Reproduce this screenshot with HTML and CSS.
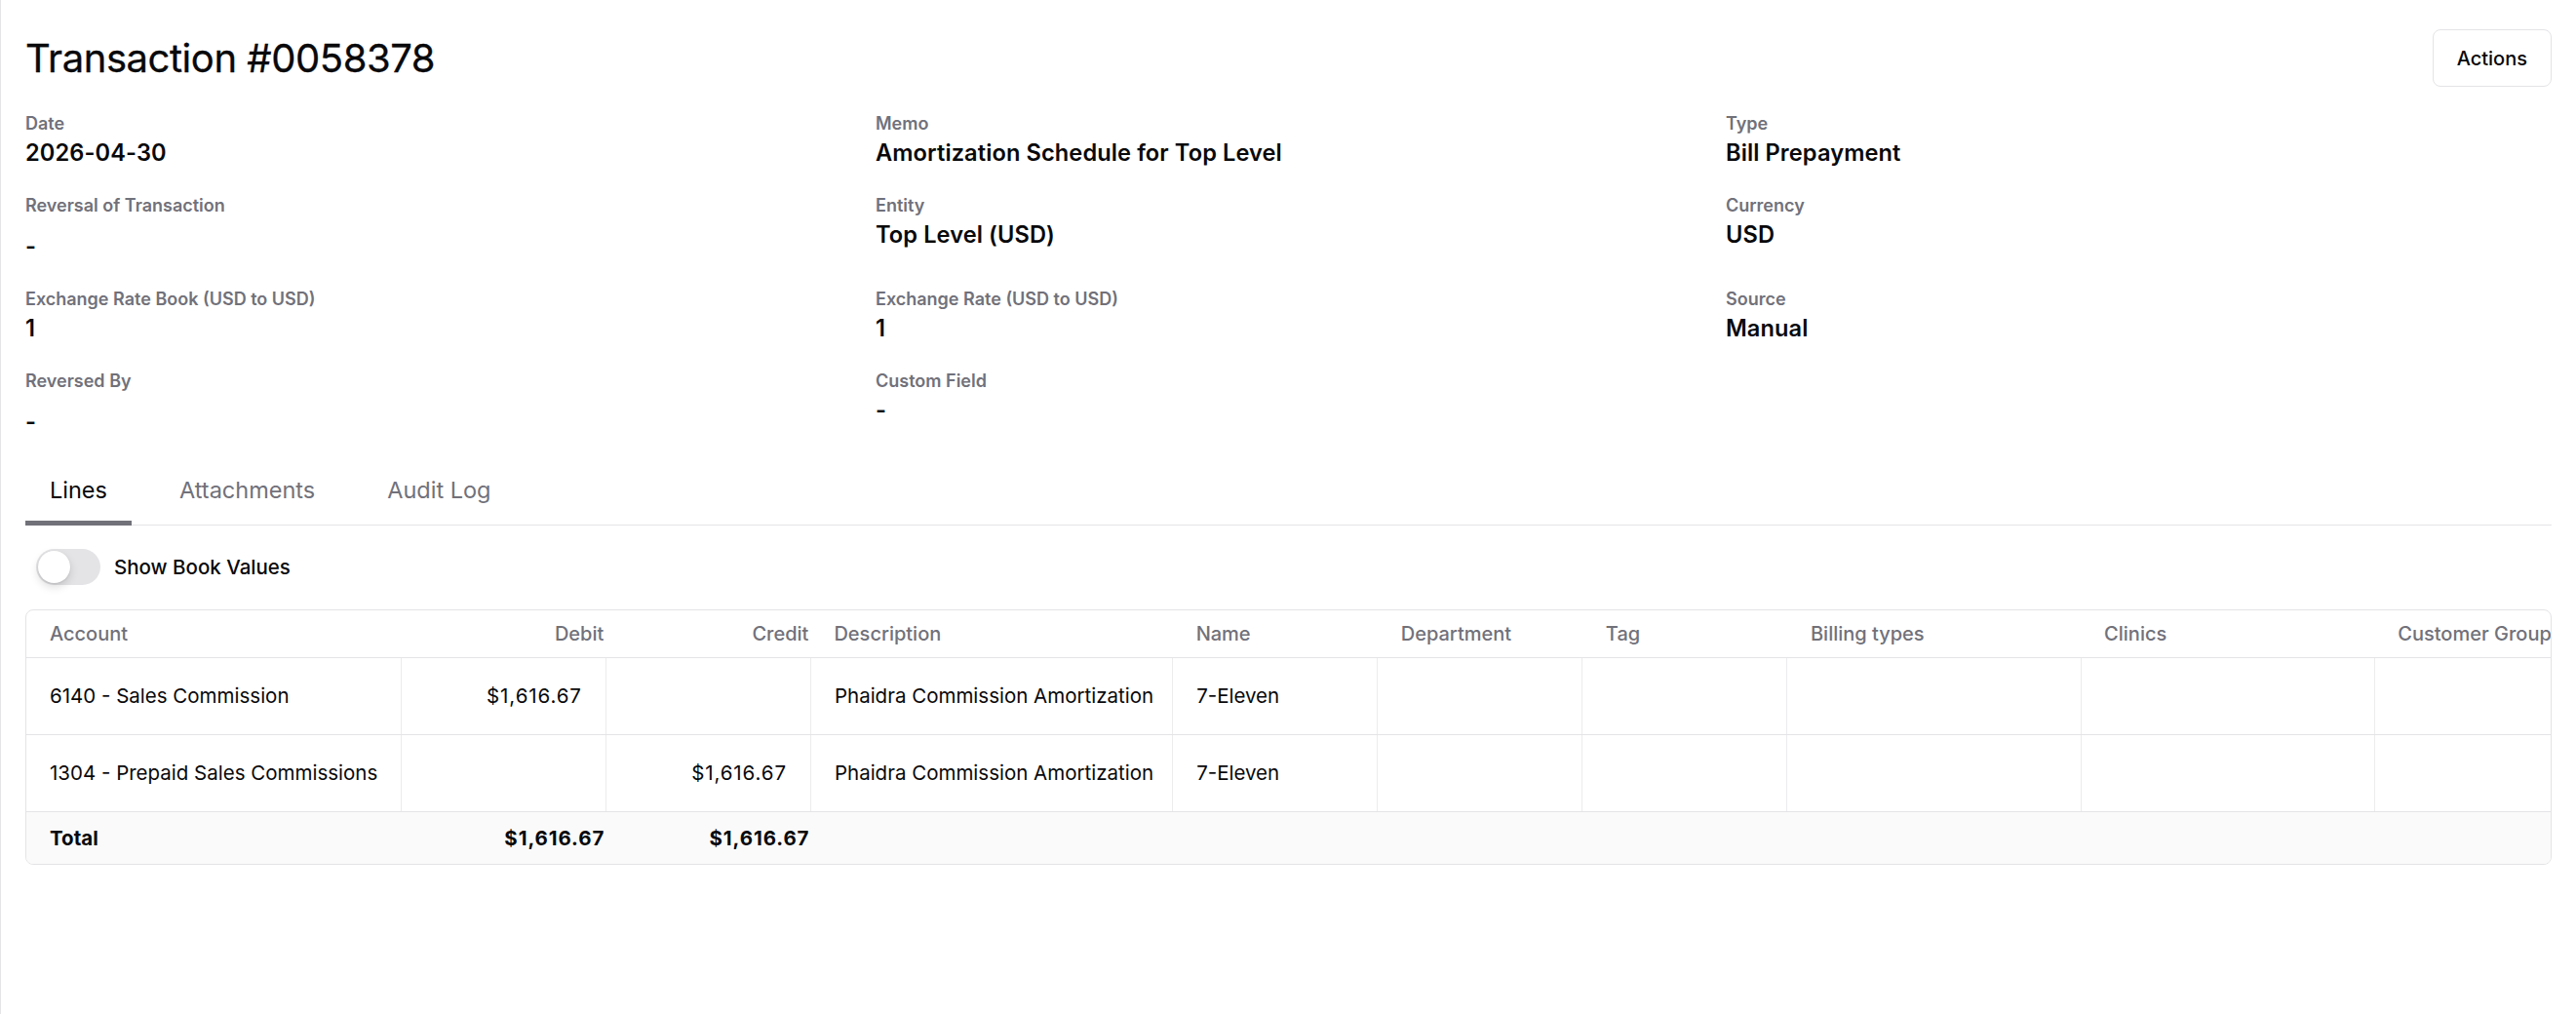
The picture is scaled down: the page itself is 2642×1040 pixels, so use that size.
FILE: index.html
```html
<!DOCTYPE html>
<html lang="en">
<head>
<meta charset="utf-8">
<title>Transaction #0058378</title>
<link rel="stylesheet" href="styles.css">
</head>
<body>
<div class="page">
  <header class="page-header">
    <h1 class="title">Transaction #0058378</h1>
    <button class="btn" type="button">Actions</button>
  </header>

  <dl class="fields">
    <div class="field"><dt class="label">Date</dt><dd class="value">2026-04-30</dd></div>
    <div class="field"><dt class="label">Memo</dt><dd class="value">Amortization Schedule for Top Level</dd></div>
    <div class="field"><dt class="label">Type</dt><dd class="value">Bill Prepayment</dd></div>

    <div class="field"><dt class="label">Reversal of Transaction</dt><dd class="value value-link">-</dd></div>
    <div class="field"><dt class="label">Entity</dt><dd class="value">Top Level (USD)</dd></div>
    <div class="field"><dt class="label">Currency</dt><dd class="value">USD</dd></div>

    <div class="field"><dt class="label">Exchange Rate Book (USD to USD)</dt><dd class="value">1</dd></div>
    <div class="field"><dt class="label">Exchange Rate (USD to USD)</dt><dd class="value">1</dd></div>
    <div class="field"><dt class="label">Source</dt><dd class="value">Manual</dd></div>

    <div class="field"><dt class="label">Reversed By</dt><dd class="value value-link">-</dd></div>
    <div class="field"><dt class="label">Custom Field</dt><dd class="value">-</dd></div>
  </dl>

  <nav class="tabs">
    <button class="tab tab-active" type="button">Lines</button>
    <button class="tab" type="button">Attachments</button>
    <button class="tab" type="button">Audit Log</button>
  </nav>

  <label class="switch-row">
    <span class="switch"><span class="switch-knob"></span></span>
    <span class="switch-label">Show Book Values</span>
  </label>

  <div class="table-wrap">
    <table class="lines">
      <colgroup>
        <col class="c-account">
        <col class="c-num">
        <col class="c-num">
        <col class="c-desc">
        <col class="c-std">
        <col class="c-std">
        <col class="c-std">
        <col class="c-wide">
        <col class="c-wide">
        <col class="c-wide">
      </colgroup>
      <thead>
        <tr>
          <th>Account</th>
          <th class="num">Debit</th>
          <th class="num">Credit</th>
          <th>Description</th>
          <th>Name</th>
          <th>Department</th>
          <th>Tag</th>
          <th>Billing types</th>
          <th>Clinics</th>
          <th>Customer Group</th>
        </tr>
      </thead>
      <tbody>
        <tr>
          <td>6140 - Sales Commission</td>
          <td class="num">$1,616.67</td>
          <td class="num"></td>
          <td>Phaidra Commission Amortization</td>
          <td>7-Eleven</td>
          <td></td><td></td><td></td><td></td><td></td>
        </tr>
        <tr>
          <td>1304 - Prepaid Sales Commissions</td>
          <td class="num"></td>
          <td class="num">$1,616.67</td>
          <td>Phaidra Commission Amortization</td>
          <td>7-Eleven</td>
          <td></td><td></td><td></td><td></td><td></td>
        </tr>
      </tbody>
      <tfoot>
        <tr>
          <td>Total</td>
          <td class="num">$1,616.67</td>
          <td class="num">$1,616.67</td>
          <td></td><td></td><td></td><td></td><td></td><td></td><td></td>
        </tr>
      </tfoot>
    </table>
  </div>
</div>
</body>
</html>
```

FILE: styles.css
```css
* { box-sizing: border-box; }

html, body {
  margin: 0;
  padding: 0;
  background: #ffffff;
}

body {
  font-family: Inter, "Noto Sans", "Liberation Sans", sans-serif;
  color: #09090b;
  border-left: 1px solid #e4e4e7;
  min-height: 100vh;
}

.page {
  padding: 30px 25px 40px 25px;
}

.page-header {
  display: flex;
  align-items: center;
  justify-content: space-between;
  height: 59px;
}

.title {
  margin: 0;
  font-size: 40px;
  line-height: 48px;
  font-weight: 400;
  letter-spacing: -0.45px;
  color: #09090b;
  -webkit-text-stroke: 0.3px #09090b;
}

.btn {
  font-family: inherit;
  font-size: 20px;
  font-weight: 500;
  color: #09090b;
  background: #ffffff;
  border: 1px solid #e4e4e7;
  border-radius: 8px;
  height: 59px;
  padding: 0 24px;
  cursor: pointer;
}

.fields {
  margin: 27px 0 0 0;
  display: grid;
  grid-template-columns: repeat(3, 1fr);
  column-gap: 25px;
  row-gap: 28px;
}

.field { margin: 0; }

.label {
  font-size: 18px;
  line-height: 22px;
  font-weight: 600;
  color: #71717a;
}

.value {
  margin: 4px 0 0 0;
  font-size: 23.6px;
  line-height: 30px;
  font-weight: 600;
  color: #09090b;
  letter-spacing: 0.1px;
}

.value-link {
  padding-top: 12px;
}

.tabs {
  margin-top: 39px;
  display: flex;
  gap: 24px;
  border-bottom: 1px solid #e4e4e7;
}

.tab {
  font-family: inherit;
  font-size: 23.5px;
  line-height: 32px;
  font-weight: 400;
  color: #71717a;
  background: none;
  border: none;
  border-bottom: 5px solid transparent;
  margin-bottom: -1px;
  padding: 0 25px 15px 25px;
  cursor: pointer;
}

.tab-active {
  color: #09090b;
  border-bottom-color: #71717a;
}

.switch-row {
  display: flex;
  align-items: center;
  gap: 14px;
  margin: 24px 0 0 11px;
  height: 37px;
}

.switch {
  position: relative;
  display: block;
  width: 66px;
  height: 37px;
  border-radius: 19px;
  background: #e4e4e7;
}

.switch-knob {
  position: absolute;
  left: 2px;
  top: 2px;
  width: 33px;
  height: 33px;
  border-radius: 50%;
  background: #ffffff;
  box-shadow: 0 4px 10px rgba(0, 0, 0, 0.14), 0 1px 2px rgba(0, 0, 0, 0.08);
}

.switch-label {
  font-size: 20.5px;
  font-weight: 500;
  color: #09090b;
}

.table-wrap {
  margin-top: 25px;
  border: 1px solid #e4e4e7;
  border-radius: 8px;
  overflow: hidden;
}

.lines {
  border-collapse: collapse;
  table-layout: fixed;
  width: 2710px;
  font-size: 20.5px;
}

.c-account { width: 384px; }
.c-num { width: 210px; }
.c-desc { width: 371px; }
.c-std { width: 210px; }
.c-wide { width: 301px; }

.lines th {
  height: 48px;
  padding: 0 24px;
  text-align: left;
  font-size: 20px;
  font-weight: 500;
  color: #71717a;
  white-space: nowrap;
  border-bottom: 1px solid #e4e4e7;
}

.lines th.num {
  text-align: right;
  padding-right: 2px;
}

.lines td.num {
  letter-spacing: 0.9px;
}

.lines tbody td {
  height: 79px;
  padding: 0 24px;
  white-space: nowrap;
  border-bottom: 1px solid #e4e4e7;
  border-right: 1px solid #ececee;
}

.lines tbody td.num {
  text-align: right;
  padding-right: 24px;
}

.lines tfoot td {
  height: 54px;
  padding: 0 24px;
  font-weight: 700;
  background: #fafafa;
  white-space: nowrap;
}

.lines tfoot td.num {
  text-align: right;
  padding-right: 1px;
}
```
